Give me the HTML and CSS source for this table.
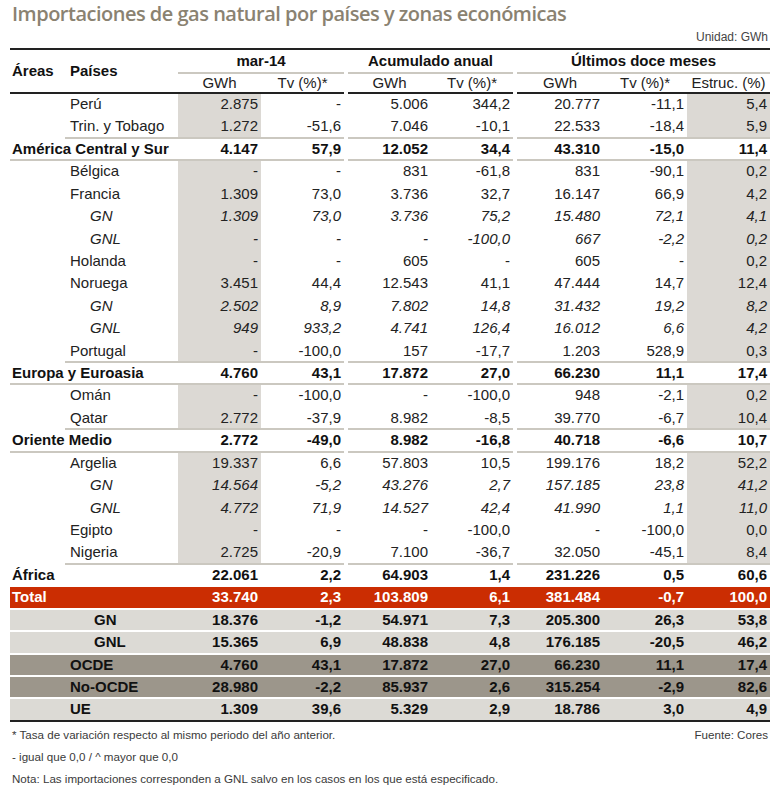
FILE: index.html
```html
<!DOCTYPE html>
<html lang="es">
<head>
<meta charset="utf-8">
<title>Importaciones de gas natural</title>
<link rel="stylesheet" href="styles.css">
</head>
<body>
<div class="page">
  <h1 class="title">Importaciones de gas natural por países y zonas económicas</h1>
  <div class="unit">Unidad: GWh</div>
  <table class="data">
    <colgroup>
      <col class="c-area"><col class="c-pais"><col class="c-m1"><col class="c-m2"><col class="c-sp">
      <col class="c-a1"><col class="c-a2"><col class="c-sp"><col class="c-u1"><col class="c-u2"><col class="c-u3">
    </colgroup>
    <thead>
      <tr class="h1">
        <th class="rs lab-area" rowspan="2">Áreas</th>
        <th class="rs lab-pais" rowspan="2">Países</th>
        <th class="grp" colspan="2">mar-14</th>
        <th class="sp"></th>
        <th class="grp" colspan="2">Acumulado anual</th>
        <th class="sp"></th>
        <th class="grp" colspan="3">Últimos doce meses</th>
      </tr>
      <tr class="h2">
        <th>GWh</th><th>Tv (%)*</th><th class="sp"></th>
        <th>GWh</th><th>Tv (%)*</th><th class="sp"></th>
        <th>GWh</th><th>Tv (%)*</th><th>Estruc. (%)</th>
      </tr>
    </thead>
    <tbody>
      <tr class="row"><td class="a"></td><td class="p">Perú</td><td class="n sh">2.875</td><td class="n">-</td><td class="sp"></td><td class="n">5.006</td><td class="n">344,2</td><td class="sp"></td><td class="n">20.777</td><td class="n">-11,1</td><td class="n sh">5,4</td></tr>
      <tr class="row pre"><td class="a"></td><td class="p">Trin. y Tobago</td><td class="n sh">1.272</td><td class="n">-51,6</td><td class="sp"></td><td class="n">7.046</td><td class="n">-10,1</td><td class="sp"></td><td class="n">22.533</td><td class="n">-18,4</td><td class="n sh">5,9</td></tr>
      <tr class="row tot"><td class="t" colspan="2">América Central y Sur</td><td class="n">4.147</td><td class="n">57,9</td><td class="sp"></td><td class="n">12.052</td><td class="n">34,4</td><td class="sp"></td><td class="n">43.310</td><td class="n">-15,0</td><td class="n">11,4</td></tr>

      <tr class="row"><td class="a"></td><td class="p">Bélgica</td><td class="n sh">-</td><td class="n">-</td><td class="sp"></td><td class="n">831</td><td class="n">-61,8</td><td class="sp"></td><td class="n">831</td><td class="n">-90,1</td><td class="n sh">0,2</td></tr>
      <tr class="row"><td class="a"></td><td class="p">Francia</td><td class="n sh">1.309</td><td class="n">73,0</td><td class="sp"></td><td class="n">3.736</td><td class="n">32,7</td><td class="sp"></td><td class="n">16.147</td><td class="n">66,9</td><td class="n sh">4,2</td></tr>
      <tr class="row sub"><td class="a"></td><td class="p">GN</td><td class="n sh">1.309</td><td class="n">73,0</td><td class="sp"></td><td class="n">3.736</td><td class="n">75,2</td><td class="sp"></td><td class="n">15.480</td><td class="n">72,1</td><td class="n sh">4,1</td></tr>
      <tr class="row sub"><td class="a"></td><td class="p">GNL</td><td class="n sh">-</td><td class="n">-</td><td class="sp"></td><td class="n">-</td><td class="n">-100,0</td><td class="sp"></td><td class="n">667</td><td class="n">-2,2</td><td class="n sh">0,2</td></tr>
      <tr class="row"><td class="a"></td><td class="p">Holanda</td><td class="n sh">-</td><td class="n">-</td><td class="sp"></td><td class="n">605</td><td class="n">-</td><td class="sp"></td><td class="n">605</td><td class="n">-</td><td class="n sh">0,2</td></tr>
      <tr class="row"><td class="a"></td><td class="p">Noruega</td><td class="n sh">3.451</td><td class="n">44,4</td><td class="sp"></td><td class="n">12.543</td><td class="n">41,1</td><td class="sp"></td><td class="n">47.444</td><td class="n">14,7</td><td class="n sh">12,4</td></tr>
      <tr class="row sub"><td class="a"></td><td class="p">GN</td><td class="n sh">2.502</td><td class="n">8,9</td><td class="sp"></td><td class="n">7.802</td><td class="n">14,8</td><td class="sp"></td><td class="n">31.432</td><td class="n">19,2</td><td class="n sh">8,2</td></tr>
      <tr class="row sub"><td class="a"></td><td class="p">GNL</td><td class="n sh">949</td><td class="n">933,2</td><td class="sp"></td><td class="n">4.741</td><td class="n">126,4</td><td class="sp"></td><td class="n">16.012</td><td class="n">6,6</td><td class="n sh">4,2</td></tr>
      <tr class="row pre"><td class="a"></td><td class="p">Portugal</td><td class="n sh">-</td><td class="n">-100,0</td><td class="sp"></td><td class="n">157</td><td class="n">-17,7</td><td class="sp"></td><td class="n">1.203</td><td class="n">528,9</td><td class="n sh">0,3</td></tr>
      <tr class="row tot"><td class="t" colspan="2">Europa y Euroasia</td><td class="n">4.760</td><td class="n">43,1</td><td class="sp"></td><td class="n">17.872</td><td class="n">27,0</td><td class="sp"></td><td class="n">66.230</td><td class="n">11,1</td><td class="n">17,4</td></tr>

      <tr class="row"><td class="a"></td><td class="p">Omán</td><td class="n sh">-</td><td class="n">-100,0</td><td class="sp"></td><td class="n">-</td><td class="n">-100,0</td><td class="sp"></td><td class="n">948</td><td class="n">-2,1</td><td class="n sh">0,2</td></tr>
      <tr class="row pre"><td class="a"></td><td class="p">Qatar</td><td class="n sh">2.772</td><td class="n">-37,9</td><td class="sp"></td><td class="n">8.982</td><td class="n">-8,5</td><td class="sp"></td><td class="n">39.770</td><td class="n">-6,7</td><td class="n sh">10,4</td></tr>
      <tr class="row tot"><td class="t" colspan="2">Oriente Medio</td><td class="n">2.772</td><td class="n">-49,0</td><td class="sp"></td><td class="n">8.982</td><td class="n">-16,8</td><td class="sp"></td><td class="n">40.718</td><td class="n">-6,6</td><td class="n">10,7</td></tr>

      <tr class="row"><td class="a"></td><td class="p">Argelia</td><td class="n sh">19.337</td><td class="n">6,6</td><td class="sp"></td><td class="n">57.803</td><td class="n">10,5</td><td class="sp"></td><td class="n">199.176</td><td class="n">18,2</td><td class="n sh">52,2</td></tr>
      <tr class="row sub"><td class="a"></td><td class="p">GN</td><td class="n sh">14.564</td><td class="n">-5,2</td><td class="sp"></td><td class="n">43.276</td><td class="n">2,7</td><td class="sp"></td><td class="n">157.185</td><td class="n">23,8</td><td class="n sh">41,2</td></tr>
      <tr class="row sub"><td class="a"></td><td class="p">GNL</td><td class="n sh">4.772</td><td class="n">71,9</td><td class="sp"></td><td class="n">14.527</td><td class="n">42,4</td><td class="sp"></td><td class="n">41.990</td><td class="n">1,1</td><td class="n sh">11,0</td></tr>
      <tr class="row"><td class="a"></td><td class="p">Egipto</td><td class="n sh">-</td><td class="n">-</td><td class="sp"></td><td class="n">-</td><td class="n">-100,0</td><td class="sp"></td><td class="n">-</td><td class="n">-100,0</td><td class="n sh">0,0</td></tr>
      <tr class="row pre"><td class="a"></td><td class="p">Nigeria</td><td class="n sh">2.725</td><td class="n">-20,9</td><td class="sp"></td><td class="n">7.100</td><td class="n">-36,7</td><td class="sp"></td><td class="n">32.050</td><td class="n">-45,1</td><td class="n sh">8,4</td></tr>
      <tr class="row tot last"><td class="t" colspan="2">África</td><td class="n">22.061</td><td class="n">2,2</td><td class="sp"></td><td class="n">64.903</td><td class="n">1,4</td><td class="sp"></td><td class="n">231.226</td><td class="n">0,5</td><td class="n">60,6</td></tr>

      <tr class="row sum red"><td class="t" colspan="2">Total</td><td class="n">33.740</td><td class="n">2,3</td><td class="sp"></td><td class="n">103.809</td><td class="n">6,1</td><td class="sp"></td><td class="n">381.484</td><td class="n">-0,7</td><td class="n">100,0</td></tr>
      <tr class="row sum light"><td class="t in2" colspan="2">GN</td><td class="n">18.376</td><td class="n">-1,2</td><td class="sp"></td><td class="n">54.971</td><td class="n">7,3</td><td class="sp"></td><td class="n">205.300</td><td class="n">26,3</td><td class="n">53,8</td></tr>
      <tr class="row sum light"><td class="t in2" colspan="2">GNL</td><td class="n">15.365</td><td class="n">6,9</td><td class="sp"></td><td class="n">48.838</td><td class="n">4,8</td><td class="sp"></td><td class="n">176.185</td><td class="n">-20,5</td><td class="n">46,2</td></tr>
      <tr class="row sum dark"><td class="t in1" colspan="2">OCDE</td><td class="n">4.760</td><td class="n">43,1</td><td class="sp"></td><td class="n">17.872</td><td class="n">27,0</td><td class="sp"></td><td class="n">66.230</td><td class="n">11,1</td><td class="n">17,4</td></tr>
      <tr class="row sum dark"><td class="t in1" colspan="2">No-OCDE</td><td class="n">28.980</td><td class="n">-2,2</td><td class="sp"></td><td class="n">85.937</td><td class="n">2,6</td><td class="sp"></td><td class="n">315.254</td><td class="n">-2,9</td><td class="n">82,6</td></tr>
      <tr class="row sum light end"><td class="t in1" colspan="2">UE</td><td class="n">1.309</td><td class="n">39,6</td><td class="sp"></td><td class="n">5.329</td><td class="n">2,9</td><td class="sp"></td><td class="n">18.786</td><td class="n">3,0</td><td class="n">4,9</td></tr>
    </tbody>
  </table>
  <div class="notes">
    <div class="note-line"><span>* Tasa de variación respecto al mismo periodo del año anterior.</span><span>Fuente: Cores</span></div>
    <div class="note-line"><span>- igual que 0,0 / ^ mayor que 0,0</span></div>
    <div class="note-line"><span>Nota: Las importaciones corresponden a GNL salvo en los casos en los que está especificado.</span></div>
  </div>
</div>
</body>
</html>
```

FILE: styles.css
```css
html, body {
  margin: 0;
  padding: 0;
  background: #ffffff;
}

body {
  font-family: "Liberation Sans", Arial, sans-serif;
  color: #222222;
}

.page {
  width: 760px;
  margin-left: 10px;
}

.title {
  margin: 0;
  padding-left: 2px;
  font-family: "Open Sans", "DejaVu Sans", sans-serif;
  font-size: 20px;
  font-weight: 600;
  line-height: 28px;
  letter-spacing: -0.5px;
  color: #8a8271;
  white-space: nowrap;
}

.unit {
  text-align: right;
  font-size: 12px;
  line-height: 18px;
  color: #444444;
  padding-right: 2px;
  margin-bottom: 2px;
}

.data {
  width: 760px;
  table-layout: fixed;
  border-collapse: separate;
  border-spacing: 0;
  font-size: 15px;
}

.c-area { width: 55px; }
.c-pais { width: 113px; }
.c-m1 { width: 83px; }
.c-m2 { width: 83px; }
.c-sp { width: 4px; }
.c-a1 { width: 83px; }
.c-a2 { width: 82px; }
.c-u1 { width: 86px; }
.c-u2 { width: 84px; }
.c-u3 { width: 83px; }

.data th,
.data td {
  padding: 0 3px;
  white-space: nowrap;
  overflow: hidden;
}

.data .sp {
  padding: 0;
}

/* header */
.h1 th {
  border-top: 2px solid #222222;
  line-height: 22px;
  font-weight: bold;
  text-align: center;
  color: #111111;
}

.h1 .grp {
  border-bottom: 2px solid #cbc8c0;
}

.h1 .rs {
  border-bottom: 2px solid #222222;
  text-align: left;
  vertical-align: middle;
}

.h1 .lab-area { padding-left: 2px; }
.h1 .lab-pais { padding-left: 5px; }

.h2 th {
  line-height: 18px;
  font-weight: normal;
  text-align: center;
  border-bottom: 2px solid #222222;
}

.h2 th.sp {
  border-bottom: none;
}

/* data rows */
.row td {
  line-height: 20.42px;
  border-bottom: 2px solid transparent;
}

.row .p {
  padding-left: 5px;
  text-align: left;
}

.row .n {
  text-align: right;
}

.row .t {
  padding-left: 2px;
  text-align: left;
}

.row .sh {
  background: #dcd9d4;
}

.sub td {
  font-style: italic;
}

.sub .p {
  padding-left: 25px;
}

.pre td:not(.a):not(.sp) {
  border-bottom-color: #cbc8c0;
}

.tot td {
  font-weight: bold;
  color: #111111;
}

.tot td:not(.sp) {
  border-bottom-color: #cbc8c0;
}

.tot.last td:not(.sp) {
  border-bottom-color: transparent;
}

/* summary rows */
.sum td {
  font-weight: bold;
  color: #111111;
  border-bottom-color: #ffffff;
}

.sum .in1 { padding-left: 60px; }
.sum .in2 { padding-left: 84px; }

.red td {
  background: #cb2d02;
  color: #ffffff;
}

.light td {
  background: #dcdad5;
}

.dark td {
  background: #9c968b;
}

.sum.end td {
  border-bottom-color: #222222;
}

/* notes */
.notes {
  font-size: 11.6px;
  line-height: 22px;
  color: #3a3a3a;
  padding: 2px 2px 0 2px;
}

.note-line {
  display: flex;
  justify-content: space-between;
}
```
